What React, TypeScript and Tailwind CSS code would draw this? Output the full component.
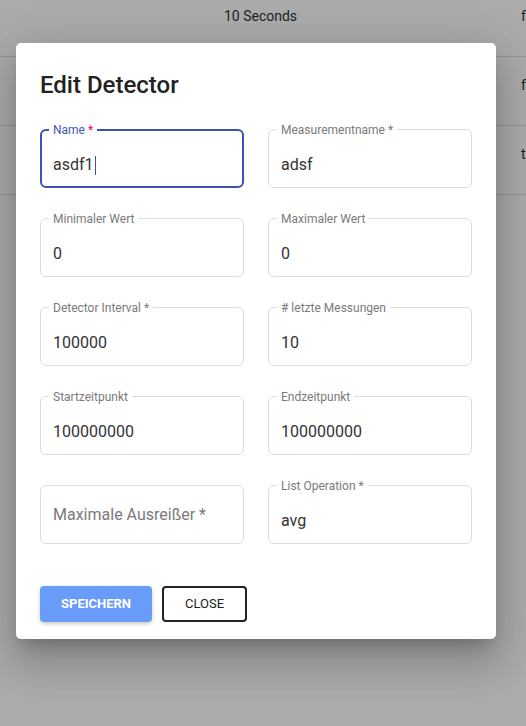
import type { ReactNode } from "react"

// the table behind the modal is mostly covered, only the visible bits are kept
const rows = [
  { interval: "10 Seconds", flag: "f" },
  { interval: "", flag: "f" },
  { interval: "", flag: "t" },
]

interface FieldProps {
  label?: string
  value?: string
  placeholder?: string
  required?: boolean
  focused?: boolean
}

const Field = ({ label, value, placeholder, required, focused }: FieldProps) => {
  return (
    <div
      className={
        focused
          ? "relative h-[59px] rounded-[6px] border-2 border-[#3f51b5] pl-[11px]"
          : "relative h-[59px] rounded-[6px] border border-[#dcdcdc] pl-[12px]"
      }
    >
      {label && (
        <span
          className={
            focused
              ? "absolute -top-[8px] left-[7px] bg-white px-[4px] text-[12px] leading-[14px] text-[#4554b8]"
              : "absolute -top-[7px] left-[8px] bg-white px-[4px] text-[12px] leading-[14px] text-[#7a7a7a]"
          }
        >
          {label}
          {required && <span className={focused ? "text-[#f50057]" : ""}> *</span>}
        </span>
      )}
      {value !== undefined ? (
        <div className={focused ? "flex items-center pt-[24px] text-[16px] leading-5 text-[#333]" : "flex items-center pt-[25px] text-[16px] leading-5 text-[#333]"}>
          {value}
          {focused && <span className="ml-[1px] inline-block h-[19px] w-px bg-[#3f51b5]" />}
        </div>
      ) : (
        <div className="flex h-full items-center text-[16px] text-[#7a7a7a]">{placeholder}</div>
      )}
    </div>
  )
}

const Dialog = ({ children }: { children: ReactNode }) => (
  <div className="w-[480px] rounded-[5px] bg-white px-[24px] pt-[26px] pb-[17px] shadow-[0px_11px_15px_-7px_rgba(0,0,0,0.2),0px_24px_38px_3px_rgba(0,0,0,0.14),0px_9px_46px_8px_rgba(0,0,0,0.12)]">
    {children}
  </div>
)

export default function App() {
  return (
    <div className="relative h-[726px] w-[526px] overflow-hidden bg-white font-['Roboto',sans-serif]">
      <div className="-mt-[12px]">
        {rows.map((row, i) => (
          <div key={i} className="flex h-[69px] border-b border-[#e0e0e0] pt-[20px] text-[14px] leading-4 text-[#333]">
            <div className="w-[521px] shrink-0 text-center">{row.interval}</div>
            <div className="shrink-0">{row.flag}</div>
          </div>
        ))}
      </div>

      <div className="absolute inset-0 bg-black/[0.33] pl-[16px] pt-[43px]">
        <Dialog>
          <h2 className="text-[24px] leading-8 font-medium text-[#222]">Edit Detector</h2>
          <div className="mt-[28px] grid grid-cols-2 gap-x-[24px] gap-y-[30px]">
            <Field label="Name" required value="asdf1" focused />
            <Field label="Measurementname" required value="adsf" />
            <Field label="Minimaler Wert" value="0" />
            <Field label="Maximaler Wert" value="0" />
            <Field label="Detector Interval" required value="100000" />
            <Field label="# letzte Messungen" value="10" />
            <Field label="Startzeitpunkt" value="100000000" />
            <Field label="Endzeitpunkt" value="100000000" />
            <Field placeholder="Maximale Ausreißer *" />
            <Field label="List Operation" required value="avg" />
          </div>
          <div className="mt-[42px] flex gap-[10px]">
            <button className="h-[36px] w-[112px] rounded-[4px] bg-[#699cf8] text-[13px] font-bold text-white shadow-[0_2px_4px_rgba(0,0,0,0.2)]">
              SPEICHERN
            </button>
            <button className="h-[36px] w-[85px] rounded-[4px] border-2 border-[#222] text-[13px] font-normal text-[#222]">
              CLOSE
            </button>
          </div>
        </Dialog>
      </div>
    </div>
  )
}
